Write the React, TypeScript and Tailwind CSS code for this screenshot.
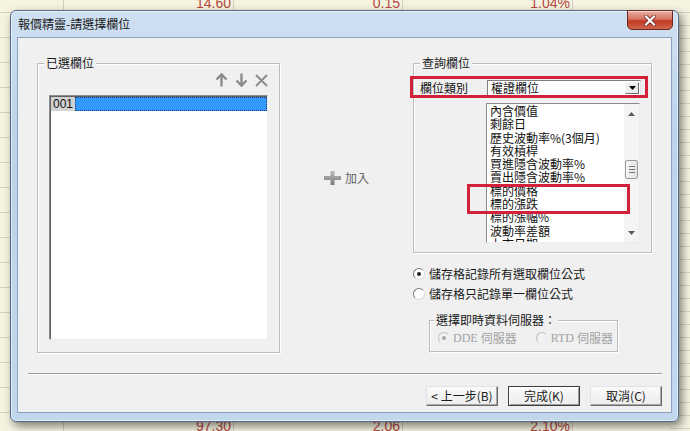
import React from 'react';

const warrantFields = [
  '內含價值',
  '剩餘日',
  '歷史波動率%(3個月)',
  '有效槓桿',
  '買進隱含波動率%',
  '賣出隱含波動率%',
  '標的價格',
  '標的漲跌',
  '標的漲幅%',
  '波動率差額',
  '上市日期',
];

function Radio({ checked, disabled }: { checked?: boolean; disabled?: boolean }) {
  return (
    <span
      className={`flex h-[12px] w-[12px] shrink-0 items-center justify-center rounded-full border ${
        disabled
          ? 'border-t-[#c0c0c0] border-l-[#c0c0c0] border-r-[#ececec] border-b-[#ececec] bg-[#f2f2f2]'
          : 'border-t-[#7c7c7c] border-l-[#7c7c7c] border-r-[#dcdcdc] border-b-[#dcdcdc] bg-white'
      }`}
    >
      {checked && <span className={`h-[4px] w-[4px] rounded-full ${disabled ? 'bg-[#a6a6a6]' : 'bg-[#1f1f1f]'}`} />}
    </span>
  );
}

function Button({ label, isDefault }: { label: string; isDefault?: boolean }) {
  return (
    <button
      className={`flex h-[20px] items-center justify-center bg-[linear-gradient(180deg,#fafafa,#ececec)] text-[12px] leading-none text-[#1a1a1a] ${
        isDefault
          ? 'w-[72px] border border-[#3c3c3c] shadow-[inset_1px_1px_0_#ffffff,inset_-1px_-1px_0_#9a9a9a]'
          : 'w-[72px] border border-t-[#e2e2e2] border-l-[#e2e2e2] border-r-[#6a6a6a] border-b-[#6a6a6a] shadow-[inset_-1px_-1px_0_#a8a8a8]'
      }`}
    >
      {label}
    </button>
  );
}

function GroupLabel({ children }: { children: React.ReactNode }) {
  return (
    <span className="absolute left-[6px] top-[-9px] bg-[#f0f0f0] px-[2px] text-[12px] leading-[16px] text-[#1a1a1a]">
      {children}
    </span>
  );
}

function SheetBackground() {
  const cols = [63, 233, 402, 572];
  return (
    <div className="absolute inset-0 bg-[#f6f4e1] font-['Liberation_Sans',Arial,sans-serif] text-[14px] leading-[16px] text-[#b4483f]">
      <div className="absolute inset-y-0 left-0 w-[63px] bg-[repeating-linear-gradient(180deg,transparent_0_12px,#d7d4c0_12px_13px,transparent_13px_25px)]" />
      <div className="absolute inset-y-0 right-0 w-[20px] bg-[repeating-linear-gradient(180deg,transparent_0_12px,#d7d4c0_12px_13px)]" />
      {cols.map((x) => (
        <div key={x} className="absolute top-0 h-full w-px bg-[#d3d0bb]" style={{ left: x }} />
      ))}
      <div className="absolute top-[-5px] right-[459px]">14.60</div>
      <div className="absolute top-[-5px] right-[290px]">0.15</div>
      <div className="absolute top-[-5px] right-[120px]">1.04%</div>
      <div className="absolute top-[418px] right-[459px]">97.30</div>
      <div className="absolute top-[418px] right-[290px]">2.06</div>
      <div className="absolute top-[418px] right-[120px]">2.10%</div>
    </div>
  );
}

function CloseButton() {
  return (
    <div className="absolute right-[5px] top-[-1px] flex h-[20px] w-[46px] items-center justify-center rounded-b-[5px] border border-[#6e2a22] bg-[linear-gradient(180deg,#eab0a2_0%,#d7735f_45%,#c13a24_55%,#d0644c_100%)] shadow-[inset_0_1px_0_rgba(255,255,255,0.5)]">
      <svg width="12" height="11" viewBox="0 0 12 11">
        <path d="M2 1.5 L10 9.5 M10 1.5 L2 9.5" stroke="#5a1d14" strokeWidth="3.6" strokeLinecap="square" />
        <path d="M2 1.5 L10 9.5 M10 1.5 L2 9.5" stroke="#ffffff" strokeWidth="2.2" strokeLinecap="square" />
      </svg>
    </div>
  );
}

function ArrowIcon({ down }: { down?: boolean }) {
  return (
    <svg width="13" height="14" viewBox="0 0 13 14" className={down ? 'rotate-180' : ''}>
      <path d="M6.5 1.5 V13.5" stroke="#8a8a8a" strokeWidth="2.4" />
      <path d="M1.5 6.5 L6.5 1.5 L11.5 6.5" stroke="#8a8a8a" strokeWidth="2.4" fill="none" />
    </svg>
  );
}

function DeleteIcon() {
  return (
    <svg width="13" height="13" viewBox="0 0 13 13">
      <path d="M1 1 L12 12 M12 1 L1 12" stroke="#8a8a8a" strokeWidth="1.8" />
    </svg>
  );
}

function SelectedGroup() {
  return (
    <div className="relative flex h-[290px] w-[243px] flex-col border border-[#bdbdbd] px-[11px] pt-[9px] shadow-[inset_1px_1px_0_#ffffff,1px_1px_0_#ffffff]">
      <GroupLabel>已選欄位</GroupLabel>
      <div className="flex h-[14px] items-center justify-end gap-[7px]">
        <ArrowIcon />
        <ArrowIcon down />
        <DeleteIcon />
      </div>
      <div className="mt-[8px] h-[245px] w-[219px] border border-t-[#8c8c8c] border-l-[#8c8c8c] border-r-[#ededed] border-b-[#ededed] bg-white shadow-[inset_1px_1px_0_#5f5f5f]">
        <div className="ml-px mt-px flex h-[14px] text-[12px] leading-[14px]">
          <span className="w-[24px] bg-[#d2d2d2] pl-[2px] font-['Liberation_Sans',Arial,sans-serif] text-[#111]">001</span>
          <span className="flex-1 border border-dotted border-[#1a3e6e] bg-[#3399ff]" />
        </div>
      </div>
    </div>
  );
}

function AddButton() {
  return (
    <div className="flex h-[16px] items-center gap-[4px] text-[12px] leading-[16px] text-[#666666]">
      <svg width="17" height="14" viewBox="0 0 17 14">
        <defs>
          <linearGradient id="plusg" x1="0" y1="0" x2="0" y2="1">
            <stop offset="0" stopColor="#b9b9b9" />
            <stop offset="1" stopColor="#7d7d7d" />
          </linearGradient>
        </defs>
        <path d="M6.5 0 H10.5 V5 H17 V9 H10.5 V14 H6.5 V9 H0 V5 H6.5 Z" fill="url(#plusg)" />
      </svg>
      <span>加入</span>
    </div>
  );
}

function QueryGroup() {
  return (
    <div className="relative flex h-[190px] w-[239px] flex-col border border-[#bdbdbd] pl-[6px] pt-[16px] shadow-[inset_1px_1px_0_#ffffff,1px_1px_0_#ffffff]">
      <GroupLabel>查詢欄位</GroupLabel>
      <div className="flex h-[16px] items-center">
        <span className="w-[67px] text-[12px] leading-[16px] text-[#111]">欄位類別</span>
        <div className="flex h-[16px] w-[154px] items-center border border-t-[#7d7d7d] border-l-[#7d7d7d] border-r-[#e8e8e8] border-b-[#e8e8e8] bg-white">
          <span className="flex-1 pl-[3px] text-[12px] leading-[14px] text-[#111]">權證欄位</span>
          <span className="mr-px flex h-[12px] w-[14px] items-center justify-center border border-t-[#f8f8f8] border-l-[#f8f8f8] border-r-[#6d6d6d] border-b-[#6d6d6d] bg-[#ededed]">
            <svg width="7" height="4" viewBox="0 0 7 4">
              <path d="M0 0 H7 L3.5 4 Z" fill="#000" />
            </svg>
          </span>
        </div>
      </div>
      <div className="ml-[66px] mt-[7px] flex h-[140px] w-[154px] overflow-hidden border border-t-[#8c8c8c] border-l-[#8c8c8c] border-r-[#ededed] border-b-[#ededed] bg-white">
        <div className="flex-1 overflow-hidden pl-[3px] text-[12px] leading-[13.3px] text-[#111]">
          {warrantFields.map((f) => (
            <div key={f} className="whitespace-nowrap">
              {f}
            </div>
          ))}
        </div>
        <div className="flex w-[15px] flex-col items-center bg-[#f4f4f4] pt-[8px]">
          <svg width="7" height="4" viewBox="0 0 7 4">
            <path d="M0 4 H7 L3.5 0 Z" fill="#5a5a5a" />
          </svg>
          <div className="mt-[44px] flex h-[19px] w-[13px] flex-col items-center justify-center gap-[2px] rounded-[2px] border border-[#9a9a9a] bg-[linear-gradient(90deg,#f6f6f6,#e2e2e2)]">
            <span className="h-px w-[6px] bg-[#777]" />
            <span className="h-px w-[6px] bg-[#777]" />
            <span className="h-px w-[6px] bg-[#777]" />
          </div>
          <svg width="7" height="4" viewBox="0 0 7 4" className="mt-auto mb-[7px]">
            <path d="M0 0 H7 L3.5 4 Z" fill="#5a5a5a" />
          </svg>
        </div>
      </div>
    </div>
  );
}

function Dialog() {
  return (
    <div className="absolute left-[10px] top-[10px] flex h-[412px] w-[669px] flex-col rounded-[6px] border border-[#4f6a8c] bg-[linear-gradient(180deg,#cfe0f2_0%,#bdd3eb_30%,#c2d7ee_100%)] shadow-[3px_4px_10px_rgba(0,0,0,0.5),inset_0_0_0_1px_rgba(255,255,255,0.55)]">
      <div className="relative flex h-[26px] shrink-0 items-center pl-[7px] text-[12px] leading-none text-[#1b1b1b]">
        報價精靈-請選擇欄位
        <CloseButton />
      </div>
      <div className="mx-[6px] flex h-[376px] flex-col border border-[#8aa3c2] bg-[#f0f0f0]">
        <div className="flex items-start pl-[19px] pt-[25px]">
          <SelectedGroup />
          <div className="flex w-[133px] items-start justify-center pt-[107px]">
            <AddButton />
          </div>
          <div className="flex w-[239px] flex-col">
            <QueryGroup />
            <div className="mt-[13px] flex h-[16px] items-center gap-[4px] text-[12px] leading-[16px] text-[#1a1a1a]">
              <Radio checked />
              <span>儲存格記錄所有選取欄位公式</span>
            </div>
            <div className="mt-[4px] flex h-[16px] items-center gap-[4px] text-[12px] leading-[16px] text-[#1a1a1a]">
              <Radio />
              <span>儲存格只記錄單一欄位公式</span>
            </div>
            <div className="relative ml-[16px] mt-[18px] flex h-[32px] w-[189px] items-center gap-[19px] border border-[#bdbdbd] pl-[8px] pt-[3px] text-[12px] leading-[16px] text-[#a3a3a3] shadow-[inset_1px_1px_0_#ffffff,1px_1px_0_#ffffff]">
              <span className="absolute left-[4px] top-[-9px] bg-[#f0f0f0] px-[2px] text-[#1a1a1a]">選擇即時資料伺服器：</span>
              <div className="flex items-center gap-[3px]">
                <Radio checked disabled />
                <span className="font-['Liberation_Serif','Noto_Sans_CJK_TC',serif]">DDE </span>
                <span>伺服器</span>
              </div>
              <div className="flex items-center gap-[3px]">
                <Radio disabled />
                <span className="font-['Liberation_Serif','Noto_Sans_CJK_TC',serif]">RTD </span>
                <span>伺服器</span>
              </div>
            </div>
          </div>
        </div>
        <div className="ml-[10px] mr-[9px] mt-[20px] h-[2px] border-t border-b border-t-[#a0a0a0] border-b-white" />
        <div className="mr-[9px] mt-[11px] flex justify-end gap-[10px]">
          <Button label="< 上一步(B)" />
          <Button label="完成(K)" isDefault />
          <Button label="取消(C)" />
        </div>
      </div>
    </div>
  );
}

export default function App() {
  return (
    <div className="relative h-[431px] w-[690px] overflow-hidden font-['Noto_Sans_CJK_TC','Noto_Sans_CJK_SC',sans-serif]">
      <SheetBackground />
      <Dialog />
      {/* red annotation boxes */}
      <div className="pointer-events-none absolute left-[410px] top-[76px] h-[22px] w-[238px] border-[3px] border-[#d3213a]" />
      <div className="pointer-events-none absolute left-[467px] top-[184px] h-[30px] w-[163px] border-[3px] border-[#d3213a]" />
    </div>
  );
}
